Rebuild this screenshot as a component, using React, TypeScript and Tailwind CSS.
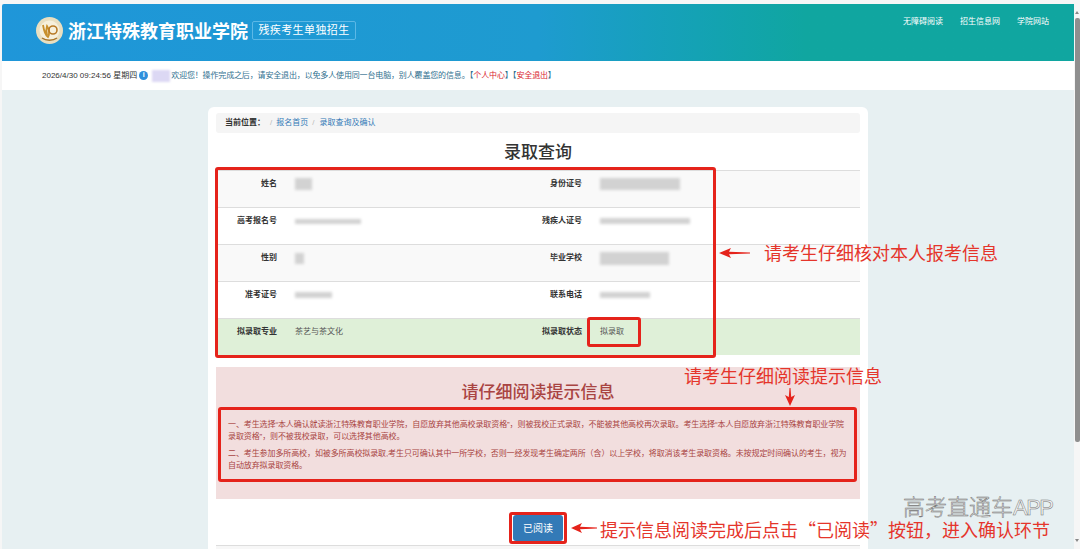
const rows = [
  { bg: "bg-[#f9f9f9]", l1: "姓名", v1: <Blur w="w-[17px]" h="h-[12px]" />, l2: "身份证号", v2: <Blur w="w-[80px]" h="h-[12px]" /> },
  { bg: "bg-white", l1: "高考报名号", v1: <Blur w="w-[66px]" h="h-[5px]" />, l2: "残疾人证号", v2: <Blur w="w-[90px]" h="h-[6px]" /> },
  { bg: "bg-[#f9f9f9]", l1: "性别", v1: <Blur w="w-[9px]" h="h-[11px]" />, l2: "毕业学校", v2: <Blur w="w-[69px]" h="h-[13px]" /> },
  { bg: "bg-white", l1: "准考证号", v1: <Blur w="w-[37px]" h="h-[6px]" />, l2: "联系电话", v2: <Blur w="w-[50px]" h="h-[6px]" /> },
]

function Blur({ w, h }: { w: string; h: string }) {
  return <div className={`${w} ${h} bg-[#d2d2d2] blur-[1.5px]`} />
}

function Row({ bg, l1, v1, l2, v2 }: { bg: string; l1: string; v1: React.ReactNode; l2: string; v2: React.ReactNode }) {
  return (
    <div className={`flex h-[37px] items-start border-t border-[#ddd] pt-[7px] text-[8px] leading-[12px] text-[#333] ${bg}`}>
      <div className="w-[61px] text-right font-bold">{l1}</div>
      <div className="ml-[18px] flex h-[12px] w-[226px] items-center">{v1}</div>
      <div className="w-[61px] text-right font-bold">{l2}</div>
      <div className="ml-[18px] flex h-[12px] items-center">{v2}</div>
    </div>
  )
}

function Logo() {
  return (
    <svg width="27" height="27" viewBox="0 0 27 27" className="shrink-0">
      <circle cx="13.5" cy="13.5" r="13.5" fill="#e9dfc0" />
      <circle cx="13.5" cy="13.5" r="10" fill="#f6f0dc" />
      <path d="M7 8c1 6 2 10 5 12 2-3 1-8-1-11-1 3-1 6 0 9" fill="none" stroke="#c8902c" strokeWidth="1.8" />
      <circle cx="17" cy="13" r="4" fill="none" stroke="#b87a26" strokeWidth="1.6" />
      <path d="M6 21c4 3 11 3 15 0" fill="none" stroke="#a8762c" strokeWidth="1.5" />
    </svg>
  )
}

function Frame({ className }: { className: string }) {
  return <div className={`absolute rounded-[3px] border-[3px] border-[#e5231b] ${className}`} />
}

export default function App() {
  return (
    <div className="relative flex h-[549px] w-[1080px] overflow-hidden bg-[#f6f6f6] font-['Liberation_Sans','Noto_Sans_CJK_SC',sans-serif]">
      <main className="flex min-w-0 flex-1 flex-col pl-[2px] pt-[4px]">
        <header className="flex h-[57px] shrink-0 justify-between rounded-tl-[2px] bg-linear-to-r from-[#1f96d9] via-[#1e9bd0] via-50% to-[#10a6a0] to-75% pl-[34px] pr-[25px] pt-[13px] text-white">
          <div className="flex h-[27px] items-center">
            <Logo />
            <div className="ml-[5px] text-[18px] font-bold font-['Noto_Sans_CJK_SC',sans-serif]">浙江特殊教育职业学院</div>
            <div className="ml-[4px] flex h-[19px] w-[104px] items-center justify-center rounded-[2px] border border-[#5cb8e6] text-[11px] tracking-[0.4px]">残疾考生单独招生</div>
          </div>
          <nav className="flex gap-[17px] text-[8px] leading-[10px]">
            <span>无障碍阅读</span>
            <span>招生信息网</span>
            <span>学院网站</span>
          </nav>
        </header>

        <div className="flex h-[29px] shrink-0 items-center bg-white pl-[40px] text-[8px] text-[#333]">
          <span>2026/4/30 09:24:56 星期四</span>
          <span className="ml-[2px] flex h-[9px] w-[9px] items-center justify-center rounded-full bg-[#2f8fdc] text-[7px] font-bold text-white">i</span>
          <div className="ml-[4px] h-[12px] w-[18px] bg-[#dcd8f4] blur-[1px]" />
          <span className="ml-[1px] tracking-[-0.15px] text-[#31708f]">
            欢迎您！操作完成之后，请安全退出，以免多人使用同一台电脑，别人覆盖您的信息。【<span className="text-[#d9232d]">个人中心</span>】【<span className="text-[#d9232d]">安全退出</span>】
          </span>
        </div>

        <div className="flex-1 bg-[#e7f0f2] pl-[206px] pt-[17px]">
          <section className="h-[442px] w-[660px] rounded-t-[6px] bg-white px-[8px] pt-[6px]">
            <div className="flex h-[20px] items-center rounded-[3px] bg-[#f5f5f5] pl-[9px] text-[8px] text-[#337ab7]">
              <b className="text-[#333]">当前位置：</b>
              <span className="ml-[5px] text-[#bbb]">/</span>
              <span className="ml-[4px]">报名首页</span>
              <span className="ml-[4px] text-[#bbb]">/</span>
              <span className="ml-[5px]">录取查询及确认</span>
            </div>
            <h1 className="flex h-[37px] items-center justify-center pt-[3px] text-[17px] font-medium text-[#333]">录取查询</h1>

            <div>
              {rows.map((r) => (
                <Row key={r.l1} {...r} />
              ))}
              <div className="flex h-[37px] items-start border-t border-[#ddd] bg-[#dff0d8] pt-[7px] text-[8px] leading-[12px] text-[#333]">
                <div className="w-[61px] text-right font-bold">拟录取专业</div>
                <div className="ml-[18px] w-[226px] text-[#555]">茶艺与茶文化</div>
                <div className="w-[61px] text-right font-bold">拟录取状态</div>
                <div className="ml-[18px] text-[#555]">拟录取</div>
              </div>
            </div>

            <div className="mt-[12px] h-[132px] bg-[#f2dede] px-[12px] pt-[17px] text-[#a94442]">
              <h2 className="text-center text-[17px] font-medium leading-[18px]">请仔细阅读提示信息</h2>
              <p className="mt-[17px] w-[620px] text-[8px] leading-[12px] tracking-[-0.1px]">一、考生选择“本人确认就读浙江特殊教育职业学院，自愿放弃其他高校录取资格”，则被我校正式录取，不能被其他高校再次录取。考生选择“本人自愿放弃浙江特殊教育职业学院录取资格”，则不被我校录取，可以选择其他高校。</p>
              <p className="mt-[5px] w-[620px] text-[8px] leading-[12px] tracking-[-0.1px]">二、考生参加多所高校，如被多所高校拟录取,考生只可确认其中一所学校，否则一经发现考生确定两所（含）以上学校，将取消该考生录取资格。未按规定时间确认的考生，视为自动放弃拟录取资格。</p>
            </div>

            <div className="flex justify-center pt-[16px]">
              <button className="h-[26px] w-[50px] rounded-[3px] bg-[#337ab7] text-[10px] text-white">已阅读</button>
            </div>
            <div className="mt-[4px] h-[4px] border-t border-[#ddd] bg-[#f7f7f7]" />
          </section>
        </div>
      </main>

      <aside className="flex w-[6px] shrink-0 flex-col items-center bg-[#f6f6f6] pt-[11px]">
        <div className="h-0 w-0 border-x-[2px] border-b-[3px] border-x-transparent border-b-[#888]" />
        <div className="mt-[4px] h-[424px] w-[5px] rounded-[2px] bg-[#8f8f8f]" />
        <div className="mt-[97px] h-0 w-0 border-x-[2px] border-t-[3px] border-x-transparent border-t-[#888]" />
      </aside>

      {/* annotations drawn over the page */}
      <Frame className="left-[215px] top-[167px] h-[191px] w-[501px]" />
      <Frame className="left-[587px] top-[317px] h-[30px] w-[54px]" />
      <Frame className="left-[218px] top-[407px] h-[75px] w-[639px]" />
      <Frame className="left-[509px] top-[512px] h-[32px] w-[58px]" />

      <svg className="absolute left-[719px] top-[248px]" width="32" height="10" viewBox="0 0 32 10">
        <path d="M0 5 12 0 10 3.800 31 4.600 31 5.400 10 6.200 12 10Z" fill="#e5231b" />
      </svg>
      <svg className="absolute left-[785px] top-[388px]" width="10" height="18" viewBox="0 0 10 18">
        <path d="M5 18 0 7 3.800 9 4.500 0 5.500 0 6.200 9 10 7Z" fill="#e5231b" />
      </svg>
      <svg className="absolute left-[571px] top-[523px]" width="26" height="10" viewBox="0 0 26 10">
        <path d="M0 5 11 0 9 3.800 26 4.600 26 5.400 9 6.200 11 10Z" fill="#e5231b" />
      </svg>

      <div className="absolute left-[764px] top-[241px] font-['Noto_Sans_CJK_SC',sans-serif] text-[18px] leading-[22px] text-[#e5352b]">请考生仔细核对本人报考信息</div>
      <div className="absolute left-[684px] top-[364px] font-['Noto_Sans_CJK_SC',sans-serif] text-[18px] leading-[22px] text-[#e5352b]">请考生仔细阅读提示信息</div>
      <div className="absolute left-[600px] top-[520px] whitespace-nowrap font-['Noto_Sans_CJK_SC',sans-serif] text-[18px] leading-[18px] text-[#e5352b]">提示信息阅读完成后点击“已阅读”按钮，进入确认环节</div>
      <div className="absolute left-[903px] top-[497px] whitespace-nowrap text-[22px] font-light leading-[22px] text-[#f4f4f4] [-webkit-text-stroke:0.5px_#707070]">高考直通车<span className="tracking-[-1.5px]">APP</span></div>
    </div>
  )
}
